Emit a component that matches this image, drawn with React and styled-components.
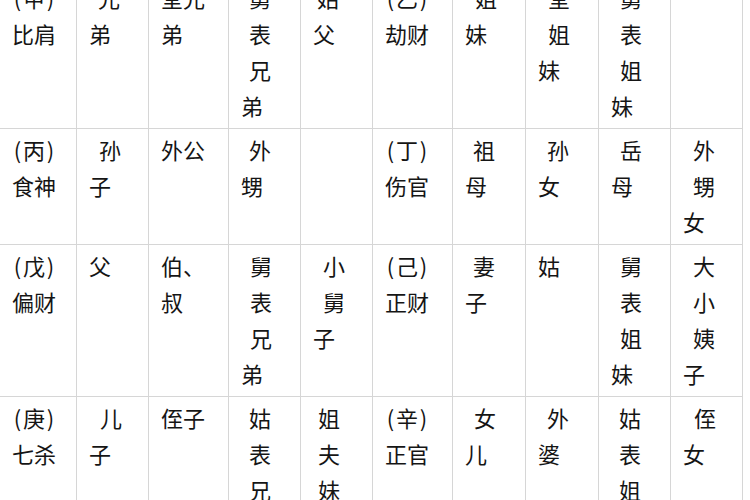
import React from "react";
import styled, { createGlobalStyle } from "styled-components";

const GlobalStyle = createGlobalStyle`
  html, body {
    margin: 0;
    padding: 0;
    background: #ffffff;
    overflow: hidden;
  }
  body {
    font-family: "Noto Sans CJK SC", "Noto Sans", sans-serif;
  }
`;

const Page = styled.div`
  width: 750px;
  height: 500px;
  overflow: hidden;
  background: #ffffff;
`;

const Table = styled.table`
  border-collapse: collapse;
  table-layout: fixed;
  width: 744px;
  margin: -24px 0 0 -1px;
  color: #151515;
  font-size: 22px;
`;

const Col = styled.col`
  width: ${(p) => p.$w}px;
`;

const Cell = styled.td`
  border: 1px solid #d6d6d6;
  padding: 2px 0 5px 12px;
  vertical-align: top;
`;

const Line = styled.div`
  height: 36px;
  line-height: 36px;
  white-space: nowrap;
  padding-left: ${(p) => p.$indent || 0}px;
`;

const Paren = styled.span`
  display: inline-block;
  width: 11px;
  text-align: center;
`;

const widths = [77, 72, 80, 72, 72, 80, 73, 73, 72, 72];

const rows = [
  [
    { lines: ["(甲)", "比肩"] },
    { lines: ["兄", "弟"], indent: 9 },
    { lines: ["堂兄", "弟"] },
    { lines: ["舅", "表", "兄", "弟"], indent: 8 },
    { lines: ["姑", "父"], indent: 4 },
    { lines: ["(乙)", "劫财"] },
    { lines: ["姐", "妹"], indent: 10 },
    { lines: ["堂", "姐", "妹"], indent: 10 },
    { lines: ["舅", "表", "姐", "妹"], indent: 9 },
    { lines: [] },
  ],
  [
    { lines: ["(丙)", "食神"] },
    { lines: ["孙", "子"], indent: 10 },
    { lines: ["外公"] },
    { lines: ["外", "甥"], indent: 8 },
    { lines: [] },
    { lines: ["(丁)", "伤官"] },
    { lines: ["祖", "母"], indent: 8 },
    { lines: ["孙", "女"], indent: 9 },
    { lines: ["岳", "母"], indent: 9 },
    { lines: ["外", "甥", "女"], indent: 10 },
  ],
  [
    { lines: ["(戊)", "偏财"] },
    { lines: ["父"] },
    { lines: ["伯、", "叔"] },
    { lines: ["舅", "表", "兄", "弟"], indent: 9 },
    { lines: ["小", "舅", "子"], indent: 10 },
    { lines: ["(己)", "正财"] },
    { lines: ["妻", "子"], indent: 8 },
    { lines: ["姑"] },
    { lines: ["舅", "表", "姐", "妹"], indent: 9 },
    { lines: ["大", "小", "姨", "子"], indent: 10 },
  ],
  [
    { lines: ["(庚)", "七杀"] },
    { lines: ["儿", "子"], indent: 11 },
    { lines: ["侄子"] },
    { lines: ["姑", "表", "兄", "弟"], indent: 8 },
    { lines: ["姐", "夫", "妹", "夫"], indent: 5 },
    { lines: ["(辛)", "正官"] },
    { lines: ["女", "儿"], indent: 9 },
    { lines: ["外", "婆"], indent: 9 },
    { lines: ["姑", "表", "姐", "妹"], indent: 8 },
    { lines: ["侄", "女"], indent: 11 },
  ],
];

const renderText = (text) =>
  text.split(/([()])/).map((part, i) =>
    part === "(" || part === ")" ? <Paren key={i}>{part}</Paren> : part
  );

const App = () => {
  return (
    <Page>
      <GlobalStyle />
      <Table>
        <colgroup>
          {widths.map((w, i) => (
            <Col key={i} $w={w} />
          ))}
        </colgroup>
        <tbody>
          {rows.map((row, r) => (
            <tr key={r}>
              {row.map((cell, c) => (
                <Cell key={c}>
                  {cell.lines.map((text, l) => (
                    <Line
                      key={l}
                      $indent={l < cell.lines.length - 1 ? cell.indent : 0}
                    >
                      {renderText(text)}
                    </Line>
                  ))}
                </Cell>
              ))}
            </tr>
          ))}
        </tbody>
      </Table>
    </Page>
  );
};

export default App;
